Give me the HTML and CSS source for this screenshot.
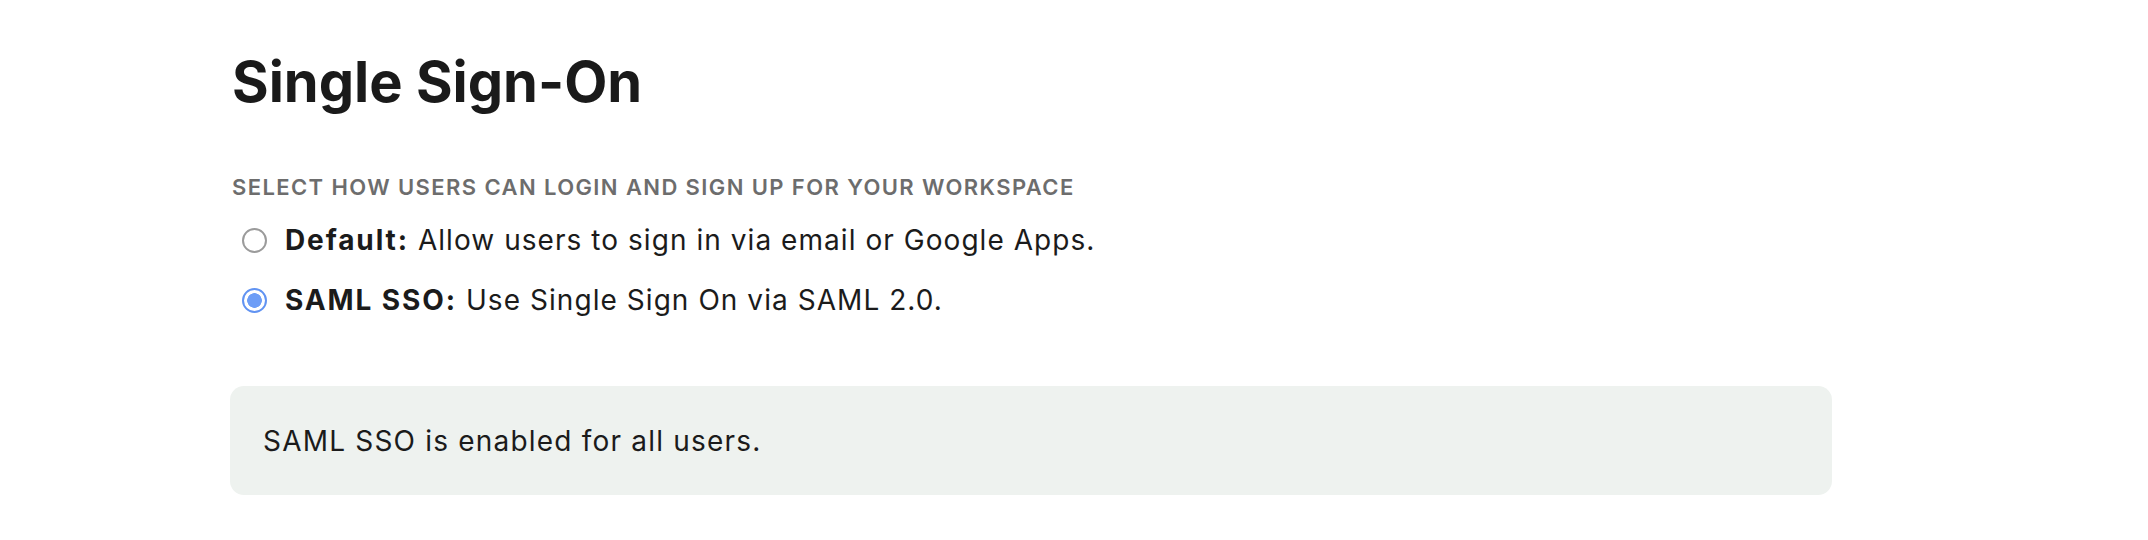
FILE: index.html
```html
<!DOCTYPE html>
<html lang="en">
<head>
<meta charset="utf-8">
<title>Single Sign-On</title>
<link rel="stylesheet" href="styles.css">
</head>
<body>
<main class="page">
  <h1 class="title">Single Sign-On</h1>
  <section class="sso">
    <h2 class="label">Select how users can login and sign up for your workspace</h2>
    <div class="options">
      <label class="option">
        <input class="radio" type="radio" name="sso" value="default">
        <span class="option-text"><strong>Default:</strong> Allow users to sign in via email or Google Apps.</span>
      </label>
      <label class="option">
        <input class="radio" type="radio" name="sso" value="saml" checked>
        <span class="option-text"><strong>SAML SSO:</strong> Use Single Sign On via SAML 2.0.</span>
      </label>
    </div>
  </section>
  <div class="notice">SAML SSO is enabled for all users.</div>
</main>
</body>
</html>
```
FILE: styles.css
```css
* { box-sizing: border-box; }

html, body {
  margin: 0;
  padding: 0;
  background: #ffffff;
}

body {
  font-family: "Inter", "Noto Sans", sans-serif;
  color: #1b1b1b;
}

.page {
  padding: 48px 0 0 230px;
  width: 1832px;
}

.title {
  margin: 0 0 0 2px;
  font-size: 56px;
  line-height: 68px;
  font-weight: 700;
  color: #1a1a1a;
  letter-spacing: 0;
}

.sso {
  margin-top: 57px;
}

.label {
  margin: 0 0 0 2px;
  font-size: 22px;
  line-height: 28px;
  font-weight: 600;
  text-transform: uppercase;
  color: #6d6d6d;
  letter-spacing: 1.4px;
}

.options {
  margin-top: 19px;
  display: flex;
  flex-direction: column;
  gap: 20px;
}

.option {
  display: flex;
  align-items: center;
  height: 40px;
  cursor: pointer;
}

.radio {
  appearance: none;
  -webkit-appearance: none;
  margin: 0 18px 0 12px;
  width: 25px;
  height: 25px;
  border-radius: 50%;
  border: 2px solid #9b9b9b;
  background: #ffffff;
  flex: none;
}

.radio:checked {
  border: 2.5px solid #6193f2;
  background: radial-gradient(circle, #6d9df6 0 7px, #ffffff 7.6px);
}

.option-text {
  font-size: 28px;
  line-height: 40px;
  color: #1b1b1b;
  letter-spacing: 1.05px;
}

.option-text strong {
  font-weight: 700;
  letter-spacing: 1.9px;
}

.notice {
  margin-top: 66px;
  width: 1602px;
  padding: 35px 33px 34px;
  background: #eef2ef;
  border-radius: 14px;
  font-size: 28px;
  line-height: 40px;
  color: #1b1b1b;
  letter-spacing: 1.2px;
}
```
